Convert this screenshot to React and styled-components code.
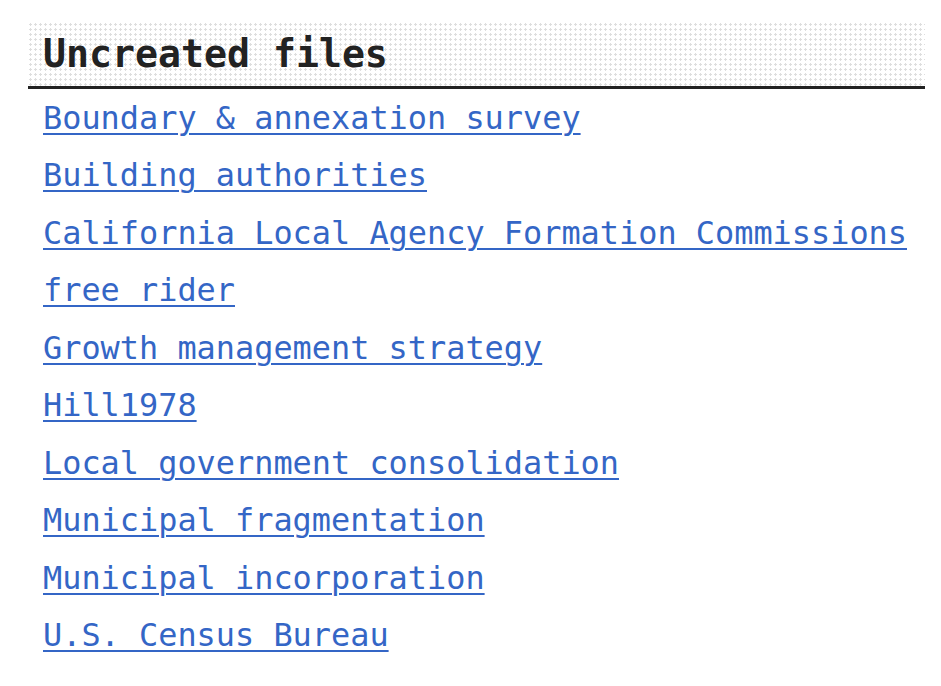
import React from 'react';
import styled, { createGlobalStyle } from 'styled-components';

const GlobalStyle = createGlobalStyle`
  html, body {
    margin: 0;
    padding: 0;
    background: #fff;
  }
`;

function App() {
  return (
    <>
      <GlobalStyle />
      <Page>
        <Heading>Uncreated files</Heading>
        <List>
          {FILES.map((title) => (
            <Item key={title}>
              <FileLink href="#">{title}</FileLink>
            </Item>
          ))}
        </List>
      </Page>
    </>
  );
}

const Page = styled.div`
  width: 897px;
  padding: 22px 0 0 28px;
  font-family: 'DejaVu Sans Mono', 'Liberation Mono', monospace;
`;

const Heading = styled.h2`
  margin: 0;
  height: 67px;
  padding: 0 0 0 15px;
  box-sizing: border-box;
  display: flex;
  align-items: center;
  font-size: 38.2px;
  font-weight: 700;
  color: #222;
  border-bottom: 3px solid #222;
  background-color: #fff;
  background-image: radial-gradient(circle, #dedede 1px, transparent 1.3px);
  background-size: 5px 5px;
`;

const List = styled.ul`
  list-style: none;
  margin: 0;
  padding: 0 0 0 15px;
`;

const Item = styled.li`
  height: 57.5px;
  display: flex;
  align-items: center;
`;

const FileLink = styled.a`
  font-size: 31.9px;
  color: #3466c6;
  text-decoration: underline;
  text-underline-offset: 4px;
  text-decoration-thickness: 2px;
`;

export default App;

const FILES = [
  'Boundary & annexation survey',
  'Building authorities',
  'California Local Agency Formation Commissions',
  'free rider',
  'Growth management strategy',
  'Hill1978',
  'Local government consolidation',
  'Municipal fragmentation',
  'Municipal incorporation',
  'U.S. Census Bureau',
];
